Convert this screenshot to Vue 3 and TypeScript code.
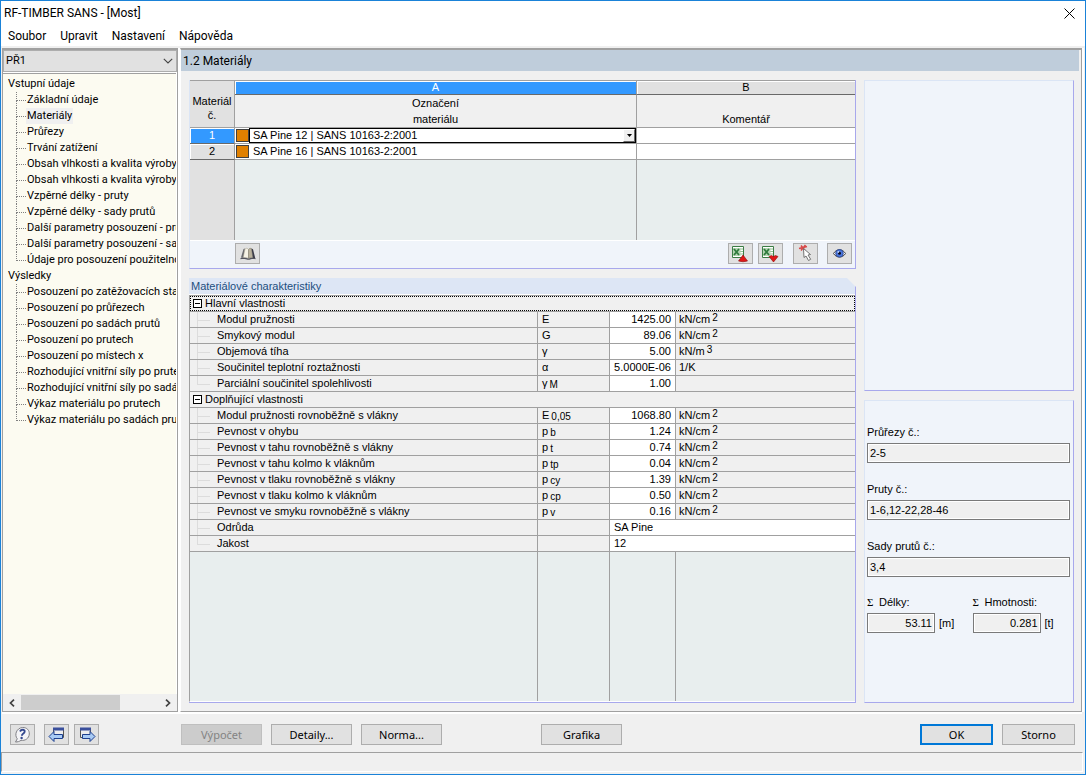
<script setup lang="ts">
import { ref } from 'vue'

interface Prop {
  name: string
  base?: string
  sub?: string
  value?: string
  unit?: string
  exp?: string
  wide?: boolean
}

const menus = ['Soubor', 'Upravit', 'Nastavení', 'Nápověda']

const tree = [
  {
    title: 'Vstupní údaje',
    items: [
      'Základní údaje',
      'Materiály',
      'Průřezy',
      'Trvání zatížení',
      'Obsah vlhkosti a kvalita výroby',
      'Obsah vlhkosti a kvalita výroby',
      'Vzpěrné délky - pruty',
      'Vzpěrné délky - sady prutů',
      'Další parametry posouzení - pruty',
      'Další parametry posouzení - sady',
      'Údaje pro posouzení použitelnosti',
    ],
  },
  {
    title: 'Výsledky',
    items: [
      'Posouzení po zatěžovacích stavech',
      'Posouzení po průřezech',
      'Posouzení po sadách prutů',
      'Posouzení po prutech',
      'Posouzení po místech x',
      'Rozhodující vnitřní síly po prutech',
      'Rozhodující vnitřní síly po sadách',
      'Výkaz materiálu po prutech',
      'Výkaz materiálu po sadách prutů',
    ],
  },
]

const groups: { title: string; rows: Prop[] }[] = [
  {
    title: 'Hlavní vlastnosti',
    rows: [
      { name: 'Modul pružnosti', base: 'E', value: '1425.00', unit: 'kN/cm', exp: '2' },
      { name: 'Smykový modul', base: 'G', value: '89.06', unit: 'kN/cm', exp: '2' },
      { name: 'Objemová tíha', base: 'γ', value: '5.00', unit: 'kN/m', exp: '3' },
      { name: 'Součinitel teplotní roztažnosti', base: 'α', value: '5.0000E-06', unit: '1/K' },
      { name: 'Parciální součinitel spolehlivosti', base: 'γ', sub: 'M', value: '1.00' },
    ],
  },
  {
    title: 'Doplňující vlastnosti',
    rows: [
      { name: 'Modul pružnosti rovnoběžně s vlákny', base: 'E', sub: '0,05', value: '1068.80', unit: 'kN/cm', exp: '2' },
      { name: 'Pevnost v ohybu', base: 'p', sub: 'b', value: '1.24', unit: 'kN/cm', exp: '2' },
      { name: 'Pevnost v tahu rovnoběžně s vlákny', base: 'p', sub: 't', value: '0.74', unit: 'kN/cm', exp: '2' },
      { name: 'Pevnost v tahu kolmo k vláknům', base: 'p', sub: 'tp', value: '0.04', unit: 'kN/cm', exp: '2' },
      { name: 'Pevnost v tlaku rovnoběžně s vlákny', base: 'p', sub: 'cy', value: '1.39', unit: 'kN/cm', exp: '2' },
      { name: 'Pevnost v tlaku kolmo k vláknům', base: 'p', sub: 'cp', value: '0.50', unit: 'kN/cm', exp: '2' },
      { name: 'Pevnost ve smyku rovnoběžně s vlákny', base: 'p', sub: 'v', value: '0.16', unit: 'kN/cm', exp: '2' },
      { name: 'Odrůda', value: 'SA Pine', wide: true },
      { name: 'Jakost', value: '12', wide: true },
    ],
  },
]

const active = ref('Materiály')
const loadCase = ref('PŘ1')
const material = ref('SA Pine 12 | SANS 10163-2:2001')
const sections = ref('2-5')
const members = ref('1-6,12-22,28-46')
const memberSets = ref('3,4')
const totalLength = ref('53.11')
const totalMass = ref('0.281')
</script>

<template>
  <div class="window">
    <header class="titlebar">
      <span>RF-TIMBER SANS - [Most]</span>
      <button class="close" aria-label="Zavřít">
        <svg width="11" height="11" viewBox="0 0 11 11"><path d="M.5 .5l10 10M10.5 .5l-10 10" stroke="#000" fill="none" /></svg>
      </button>
    </header>
    <nav class="menubar" aria-label="Menu">
      <button v-for="m in menus" :key="m">{{ m }}</button>
    </nav>

    <div class="workspace">
      <aside class="sidebar">
        <div class="case-box">
          <select v-model="loadCase" aria-label="Případ posouzení"><option>PŘ1</option></select>
          <svg width="10" height="6" viewBox="0 0 10 6"><path d="M.8 .8L5 5 9.2 .8" fill="none" stroke="#444" stroke-width="1.1" /></svg>
        </div>
        <div class="tree">
          <section v-for="g in tree" :key="g.title">
            <h2>{{ g.title }}</h2>
            <ul>
              <li v-for="(item, i) in g.items" :key="i">
                <a href="#" :class="{ current: item === active }" @click.prevent="active = item">{{ item }}</a>
              </li>
            </ul>
          </section>
        </div>
        <div class="scrollbar">
          <button aria-label="Doleva">
            <svg width="6" height="8" viewBox="0 0 6 8"><path d="M5 .7L1.5 4 5 7.3" fill="none" stroke="#404040" stroke-width="1.7" /></svg>
          </button>
          <div class="track"><div class="thumb"></div></div>
          <button aria-label="Doprava">
            <svg width="6" height="8" viewBox="0 0 6 8"><path d="M1 .7L4.500 4 1 7.3" fill="none" stroke="#404040" stroke-width="1.7" /></svg>
          </button>
        </div>
      </aside>

      <main class="content">
        <h1>1.2 Materiály</h1>
        <div class="panes">
          <div class="tables">
            <section class="materials">
              <table>
                <colgroup><col class="c-no" /><col class="c-desc" /><col /></colgroup>
                <thead>
                  <tr class="letters">
                    <th rowspan="2" class="corner">Materiál<br />č.</th>
                    <th class="letter on">A</th>
                    <th class="letter">B</th>
                  </tr>
                  <tr class="captions">
                    <th>Označení<br />materiálu</th>
                    <th>Komentář</th>
                  </tr>
                </thead>
                <tbody>
                  <tr>
                    <th class="rowno on">1</th>
                    <td>
                      <div class="mat">
                        <i class="swatch"></i>
                        <div class="picker">
                          <select v-model="material" aria-label="Označení materiálu">
                            <option>SA Pine 12 | SANS 10163-2:2001</option>
                            <option>SA Pine 16 | SANS 10163-2:2001</option>
                          </select>
                          <span class="drop"><svg width="5" height="3" viewBox="0 0 5 3"><path d="M0 0h5L2.500 3z" /></svg></span>
                        </div>
                      </div>
                    </td>
                    <td></td>
                  </tr>
                  <tr>
                    <th class="rowno">2</th>
                    <td>
                      <div class="mat"><i class="swatch"></i><span class="label">SA Pine 16 | SANS 10163-2:2001</span></div>
                    </td>
                    <td></td>
                  </tr>
                </tbody>
              </table>
              <div class="rest"><i></i><i></i><i></i></div>
              <div class="tools">
                <button class="icon-btn library" aria-label="Knihovna materiálů">
                  <svg width="18" height="16" viewBox="0 0 18 16">
                    <path d="M2 11.500L4.500 3 6 2.500 5 12z" fill="#6b6b70" />
                    <path d="M4 12L6 3c1.200-1 2.500-1 3.500 .500V12.500c-1.500-1-3.500-1.200-5.500-.5z" fill="#f7f3e6" stroke="#9a9484" stroke-width=".5" />
                    <path d="M9.500 3.500c.8-1.200 2.200-1.500 3-.8l1.500 9.300c-2-.4-3.500-.2-4.500 .5z" fill="#b9b19c" stroke="#7a7465" stroke-width=".5" />
                    <path d="M12.500 2.500l1.500 .8 2.300 9.200-2.300-.3z" fill="#3c3c48" />
                    <path d="M1.500 12c3-.4 6-.2 8 .8 2-1 4-1.200 7-.6v1c-3-.4-5 0-6 .6H8.500c-1-.6-3.500-1-7-.6z" fill="#55555e" />
                  </svg>
                </button>
                <button v-for="dir in ['up', 'down']" :key="dir" class="icon-btn" :aria-label="dir === 'up' ? 'Export do Excelu' : 'Import z Excelu'">
                  <svg width="19" height="18" viewBox="0 0 19 18">
                    <path d="M1.500 1.500h11v11h-11z" fill="#fff" stroke="#3c7d45" />
                    <path d="M9 4h3M9 6.500h3M9 9h3" stroke="#8fc191" />
                    <path d="M2 3h7.500v8H2z" fill="#b5d6b2" />
                    <path d="M3 4l5 6M8 4l-5 6" stroke="#2f7a3d" stroke-width="1.800" />
                    <path v-if="dir === 'up'" d="M12 10l4.500 6q-4.500 1.500-9 0z" fill="#e01818" stroke="#8c0c0c" stroke-width=".6" />
                    <path v-else d="M12.500 17l-4.500-5.500 2.500-1 2 1 2-1 2.500 1z" fill="#e01818" stroke="#8c0c0c" stroke-width=".6" />
                  </svg>
                </button>
                <button class="icon-btn pick" aria-label="Vybrat v grafice">
                  <svg width="19" height="19" viewBox="0 0 19 19">
                    <path d="M3 4.500L11 2.500M5 1.500l4 5M9.500 1L5 6.500" stroke="#d84848" stroke-width="1.600" />
                    <path d="M7.500 4.500l.5 9 2-1.500 2.500 4.500 2.200-1.200-2.700-4.300 2.500-.5z" fill="#fff" stroke="#666" stroke-width=".9" />
                  </svg>
                </button>
                <button class="icon-btn view" aria-label="Zobrazit">
                  <svg width="15" height="13" viewBox="0 0 15 13">
                    <path d="M1.500 6.500c3-5 9-5 12 0-3 4.800-9 4.800-12 0z" fill="#f4f4f4" stroke="#444" />
                    <circle cx="7.500" cy="6.300" r="3.800" fill="#4a76dc" stroke="#2a458f" stroke-width=".8" />
                    <circle cx="7.500" cy="6.300" r="1.500" fill="#0a0a20" />
                    <circle cx="6.300" cy="4.900" r=".9" fill="#c9dafa" />
                  </svg>
                </button>
              </div>
            </section>

            <section class="props">
              <h3>Materiálové charakteristiky</h3>
              <table>
                <colgroup><col class="p-name" /><col class="p-sym" /><col class="p-val" /><col /></colgroup>
                <tbody v-for="(g, gi) in groups" :key="g.title">
                  <tr :class="{ focused: gi === 0 }">
                    <th colspan="4" class="group"><div><button aria-label="Sbalit"></button>{{ g.title }}</div></th>
                  </tr>
                  <tr v-for="p in g.rows" :key="p.name">
                    <td class="name">{{ p.name }}</td>
                    <td class="sym">{{ p.base }}<sub v-if="p.sub">{{ p.sub }}</sub></td>
                    <td v-if="p.wide" colspan="2" class="wide">{{ p.value }}</td>
                    <template v-else>
                      <td class="val">{{ p.value }}</td>
                      <td class="unit">{{ p.unit }}<sup v-if="p.exp">{{ p.exp }}</sup></td>
                    </template>
                  </tr>
                </tbody>
              </table>
              <div class="rest"><i></i><i></i><i></i><i></i></div>
            </section>
          </div>

          <div class="side">
            <div class="panel preview"></div>
            <form class="panel summary" @submit.prevent>
              <div class="field">
                <label for="sections">Průřezy č.:</label>
                <input id="sections" v-model="sections" readonly />
              </div>
              <div class="field">
                <label for="members">Pruty č.:</label>
                <input id="members" v-model="members" readonly />
              </div>
              <div class="field">
                <label for="sets">Sady prutů č.:</label>
                <input id="sets" v-model="memberSets" readonly />
              </div>
              <div class="totals">
                <div class="field">
                  <label for="len"><b>Σ</b>Délky:</label>
                  <div><input id="len" v-model="totalLength" readonly /><span>[m]</span></div>
                </div>
                <div class="field">
                  <label for="mass"><b>Σ</b>Hmotnosti:</label>
                  <div><input id="mass" v-model="totalMass" readonly /><span>[t]</span></div>
                </div>
              </div>
            </form>
          </div>
        </div>
      </main>
    </div>

    <footer class="actions">
      <button class="icon-btn" aria-label="Nápověda">
        <svg width="19" height="18" viewBox="0 0 19 18">
          <path d="M2.500 16l1.800-3.200C1 9 3.500 2 9.500 1.500 14 1.300 16.500 4.500 16.300 8 16 12.500 12 15 8 14.300 6.500 15.500 4.500 16 2.500 16z" fill="#f4f4f7" stroke="#808086" />
          <path d="M7 5.500Q8 3.600 10 3.800 12.200 4.100 11.500 6.200 11 7.300 9.800 8 9 8.500 8.900 9.800" fill="none" stroke="#33488f" stroke-width="1.900" />
          <circle cx="8.600" cy="12" r="1.200" fill="#33488f" />
        </svg>
      </button>
      <button class="icon-btn back" aria-label="Předchozí">
        <svg width="18" height="18" viewBox="0 0 18 18">
          <path d="M5.500 2.500h10v9h-10z" fill="#ececee" stroke="#555" />
          <path d="M5 1.500h11v3H5z" fill="#3a4f9c" />
          <path d="M1 10.500L6 5.500v3h8.500v4H6v3z" fill="#a9cbf5" stroke="#1d3f8f" />
        </svg>
      </button>
      <button class="icon-btn next" aria-label="Další">
        <svg width="18" height="18" viewBox="0 0 18 18">
          <path d="M2.500 2.500h10v9h-10z" fill="#ececee" stroke="#555" />
          <path d="M2 1.500h11v3H2z" fill="#3a4f9c" />
          <path d="M17 10.500L12 5.500v3H4.500v4H12v3z" fill="#a9cbf5" stroke="#1d3f8f" />
        </svg>
      </button>
      <div class="center">
        <button class="btn" disabled>Výpočet</button>
        <button class="btn">Detaily...</button>
        <button class="btn">Norma...</button>
        <button class="btn graphic">Grafika</button>
      </div>
      <button class="btn ok">OK</button>
      <button class="btn cancel">Storno</button>
    </footer>
    <div class="status"></div>
  </div>
</template>

<style>
html,
body {
  margin: 0;
  background: #f0f0f0;
}
</style>

<style scoped>
* {
  box-sizing: border-box;
}
.window {
  display: flex;
  flex-direction: column;
  height: 100vh;
  min-height: 740px;
  border: 1px solid #1a82d8;
  background: #f0f0f0;
  color: #000;
  font: 11px/16px "Noto Sans", sans-serif;
}
button,
input,
select {
  font: inherit;
  color: inherit;
  margin: 0;
  padding: 0;
  border-radius: 0;
}
h1, h2, h3, ul {
  margin: 0;
  padding: 0;
  font-size: inherit;
  font-weight: normal;
  list-style: none;
}
.titlebar {
  flex: none;
  display: flex;
  justify-content: space-between;
  align-items: center;
  height: 24px;
  padding: 0 10px 0 3px;
  background: #fff;
  font-family: Roboto, sans-serif;
  font-size: 12px;
}
.close {
  display: flex;
  border: 0;
  background: none;
}
.menubar {
  flex: none;
  display: flex;
  gap: 14px;
  height: 21px;
  padding: 0 7px;
  background: #fff;
  font-family: Roboto, sans-serif;
  font-size: 12px;
}
.menubar button {
  border: 0;
  background: none;
}
.workspace {
  flex: 1;
  min-height: 0;
  display: flex;
  gap: 2px;
  margin: 2px 3px 0 1px;
  border-bottom: 2px solid #fff;
}
.sidebar {
  flex: none;
  display: flex;
  flex-direction: column;
  width: 176px;
  border: 1px solid #a0a0a0;
  border-top-width: 2px;
  background: #fff;
  box-shadow: 2px 0 #fff;
  font-family: Roboto, sans-serif;
}
.case-box {
  flex: none;
  display: flex;
  align-items: center;
  height: 22px;
  padding-right: 3px;
  border: 1px solid #adadad;
  background: #e1e1e1;
}
.case-box select {
  flex: 1;
  appearance: none;
  padding-left: 2px;
  border: 0;
  background: none;
}
.tree {
  flex: 1;
  min-height: 0;
  margin: 1px 1px 0 0;
  padding-top: 2px;
  overflow: hidden;
  border-top: 1px solid #a0a0a0;
  background: #fcfbf1;
  white-space: nowrap;
}
.tree h2 {
  padding-left: 5px;
}
.tree li {
  position: relative;
  height: 16px;
  padding-left: 23px;
}
.tree li::before {
  content: "";
  position: absolute;
  left: 13px;
  top: 0;
  width: 9px;
  height: 8px;
  border-left: 1px dotted #808080;
  border-bottom: 1px dotted #808080;
}
.tree li:not(:last-child)::after {
  content: "";
  position: absolute;
  left: 13px;
  top: 8px;
  height: 8px;
  border-left: 1px dotted #808080;
}
.tree a {
  display: inline-block;
  padding: 0 1px;
  color: #000;
  text-decoration: none;
}
.tree a.current {
  background: #f0f0f0;
}
.scrollbar {
  flex: none;
  display: flex;
  height: 17px;
  padding: 1px 0;
  background: #f0f0f0;
}
.scrollbar button {
  display: grid;
  place-items: center;
  width: 18px;
  border: 0;
  background: none;
}
.track {
  flex: 1;
}
.thumb {
  width: 72%;
  height: 100%;
  background: #cdcdcd;
}
.content {
  flex: 1;
  min-width: 0;
  display: flex;
  flex-direction: column;
  border: 1px solid #a0a0a0;
  border-top-width: 2px;
  border-left: 1px solid #fff;
  box-shadow: 2px 0 #fff;
}
h1 {
  flex: none;
  height: 21px;
  margin-right: 2px;
  padding: 1px 0 0 2px;
  background: #bfcddb;
  font-family: Roboto, sans-serif;
  font-size: 12px;
  line-height: 20px;
}
.panes {
  flex: 1;
  min-height: 0;
  display: flex;
  gap: 8px;
  padding: 9px 7px 8px 8px;
  font-family: "Liberation Sans", Arial, sans-serif;
}
.tables {
  flex: 1;
  min-width: 0;
  display: flex;
  flex-direction: column;
  gap: 9px;
}
.materials,
.props {
  display: flex;
  flex-direction: column;
  border-right: 1px solid #a8a8ec;
  border-bottom: 1px solid #a8a8ec;
}
.materials {
  flex: none;
  height: 189px;
  border-left: 1px solid #dbe5f5;
}
.props {
  flex: 1;
  min-height: 0;
  clip-path: polygon(0 0, calc(100% - 9px) 0, 100% 9px, 100% 100%, 0 100%);
}
table {
  width: 100%;
  table-layout: fixed;
  border-collapse: separate;
  border-spacing: 0;
}
th,
td {
  height: 16px;
  padding: 0;
  overflow: hidden;
  border-right: 1px solid #a0a0a0;
  border-bottom: 1px solid #a0a0a0;
  font-weight: normal;
  white-space: nowrap;
}
th:last-child,
td:last-child {
  border-right: 0;
}
.materials table {
  border-top: 1px solid #a0a0a0;
}
.c-no {
  width: 45px;
}
.c-desc {
  width: 402px;
}
.materials th,
.materials td {
  line-height: 15px;
}
.materials td {
  background: #fff;
}
.materials thead th.corner {
  padding-top: 8px;
  background: #e1e1e1;
  line-height: 14px;
}
.materials th.letter {
  height: 14px;
  border-bottom-color: #696969;
  box-shadow: inset 1px 1px #fff;
  background: #e1e1e1;
  line-height: 13px;
}
.materials th.on {
  background: #3399ff;
  color: #fff;
}
.captions th {
  height: 33px;
  vertical-align: bottom;
}
.materials .captions th {
  line-height: 16px;
}
.materials .rowno {
  border-bottom-color: #696969;
  box-shadow: inset 1px 1px #fff;
  background: #e1e1e1;
}
.mat {
  display: flex;
  align-items: center;
  height: 15px;
}
.swatch {
  flex: none;
  width: 13px;
  height: 13px;
  margin-left: 1px;
  border: 1px solid #404040;
  background: #e08000;
}
.label {
  padding-left: 4px;
}
.picker {
  flex: 1;
  display: flex;
  height: 15px;
  border: 1px solid #000;
}
.picker select {
  flex: 1;
  min-width: 0;
  appearance: none;
  padding-left: 3px;
  border: 0;
  background: #fff;
  line-height: 13px;
}
.drop {
  display: grid;
  place-items: center;
  width: 12px;
  border: 1px solid;
  border-color: #fff #696969 #696969 #fff;
  background: #f0f0f0;
}
.rest {
  flex: 1;
  display: grid;
  border-bottom: 1px solid #fff;
  background: #e8eeee;
}
.rest i {
  border-right: 1px solid #a0a0a0;
}
.rest i:last-child {
  border: 0;
}
.materials .rest {
  grid-template-columns: 45px 402px 1fr;
}
.materials .rest i:first-child {
  background: #e1e1e1;
}
.tools {
  flex: none;
  display: flex;
  gap: 5px;
  height: 27px;
  padding: 2px 3px 0 45px;
  background: #f0f4fa;
}
.icon-btn {
  display: grid;
  place-items: center;
  flex: none;
  width: 25px;
  height: 21px;
  border: 1px solid #adadad;
  background: #e1e1e1;
}
.library {
  margin-right: auto;
}
.pick {
  margin-left: 5px;
}
.view {
  margin-left: 4px;
}
.props h3 {
  flex: none;
  height: 17px;
  padding-left: 2px;
  border-bottom: 1px solid #fff;
  background: #dde6f5;
  color: #1c4e7e;
}
.props table,
.props .rest {
  border-left: 1px solid #a0a0a0;
}
.props table {
  border-top: 1px solid #a0a0a0;
}
.props td,
.props th {
  line-height: 15px;
}
.p-name {
  width: 348px;
}
.p-sym {
  width: 72px;
}
.p-val {
  width: 66px;
}
.props .rest {
  grid-template-columns: 348px 72px 66px 1fr;
}
.props .group {
  text-align: left;
}
.group div {
  display: flex;
  align-items: center;
  gap: 3px;
  height: 15px;
  padding-left: 3px;
}
.focused .group div {
  border: 1px dotted #000;
  padding-left: 2px;
}
.group button {
  width: 9px;
  height: 9px;
  border: 1px solid #000;
  background: linear-gradient(#000, #000) center / 5px 1px no-repeat #fff;
}
.name {
  position: relative;
  padding-left: 27px;
}
.name::before {
  content: "";
  position: absolute;
  left: 7px;
  top: 0;
  width: 12px;
  height: 8px;
  border-left: 1px solid #dcdcdc;
  border-bottom: 1px solid #dcdcdc;
}
tr:not(:last-child) .name::after {
  content: "";
  position: absolute;
  left: 7px;
  top: 8px;
  height: 8px;
  border-left: 1px solid #dcdcdc;
}
.sym {
  padding-left: 4px;
}
sub,
sup {
  position: relative;
  font-size: 10px;
  line-height: 0;
  vertical-align: baseline;
}
sub {
  top: 1px;
  padding-left: 2px;
}
sup {
  top: -2px;
  padding-left: 2px;
}
.val,
.wide {
  background: #fff;
}
.val {
  padding-right: 4px;
  text-align: right;
}
.wide {
  padding-left: 4px;
}
.unit {
  padding-left: 3px;
}
.side {
  flex: none;
  display: flex;
  flex-direction: column;
  gap: 9px;
  width: 210px;
}
.panel {
  border: 1px solid;
  border-color: #dbe5f5 #a8a8ec #a8a8ec #dbe5f5;
  background: #f0f4fa;
}
.preview {
  flex: none;
  height: 311px;
}
.summary {
  flex: 1;
  display: flex;
  flex-direction: column;
  gap: 18px;
  padding: 23px 3px 0 2px;
}
.field {
  display: flex;
  flex-direction: column;
  gap: 3px;
}
.field input {
  width: 100%;
  height: 20px;
  padding: 0 2px;
  border: 1px solid #7a7a7a;
  box-shadow: inset 0 0 0 1px #fff;
  background: #f0f0f0;
  outline: 0;
}
.totals {
  display: grid;
  grid-template-columns: 1fr 1fr;
  gap: 8px;
  margin-top: -1px;
}
.totals b {
  display: inline-block;
  width: 12px;
  font: 11px/16px "Liberation Serif", serif;
}
.totals .field div {
  display: flex;
  align-items: center;
  gap: 4px;
}
.totals input {
  width: 68px;
  text-align: right;
}
.actions {
  flex: none;
  display: flex;
  height: 38px;
  padding: 10px 10px 0 9px;
}
.back {
  margin-left: 9px;
}
.next {
  margin-left: 5px;
}
.center {
  flex: 1;
  display: flex;
  gap: 9px;
  padding-left: 82px;
}
.btn {
  width: 81px;
  height: 21px;
  border: 1px solid #adadad;
  background: #e1e1e1;
  line-height: 19px;
}
.btn:disabled {
  border-color: #bfbfbf;
  background: #ccc;
  color: #838383;
}
.graphic {
  margin-left: 90px;
}
.ok {
  width: 73px;
  border: 2px solid #0078d7;
  line-height: 17px;
}
.cancel {
  width: 73px;
  margin-left: 9px;
}
.status {
  flex: none;
  height: 20px;
  margin: 0 2px 2px 0;
  border: 1px solid;
  border-color: #a0a0a0 #fff #fff #a0a0a0;
}
</style>
